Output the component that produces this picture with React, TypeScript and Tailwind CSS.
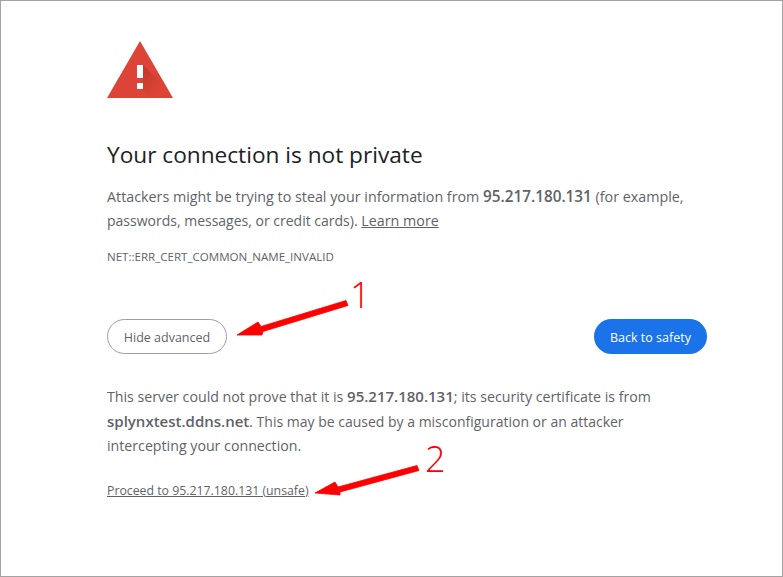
import React from 'react';

const font = "font-['Open_Sans','Noto_Sans',sans-serif]";

const Arrow: React.FC<{ className: string; width: number; height: number; d: string }> = ({ className, width, height, d }) => (
  <svg className={className} width={width} height={height} viewBox={`0 0 ${width} ${height}`}>
    <path d={d} fill="#fe0000" stroke="#fe0000" strokeWidth="0.8" strokeLinejoin="round" />
  </svg>
);

export default function App() {
  return (
    <div className={`relative w-[783px] h-[577px] bg-white overflow-hidden ${font}`}>
      <div className="flex h-[577px] w-[783px] flex-col border border-[#a3a3a3] pl-[106px] pr-[75px] pt-[40px] text-[#5f6368]">
        {/* Warning icon */}
        <svg width="66" height="58" viewBox="0 0 66 58" className="block shrink-0">
          <defs>
            <linearGradient id="warnShadow" x1="0.1" y1="0.1" x2="0.8" y2="0.8">
              <stop offset="0" stopColor="#a52714" stopOpacity="0.45" />
              <stop offset="1" stopColor="#a52714" stopOpacity="0" />
            </linearGradient>
          </defs>
          <path d="M33 0 L66 57 H0 Z" fill="#db4437" />
          <path d="M36 24 L56 44 L56 57 H44 L30 43 L36 43 Z" fill="url(#warnShadow)" />
          <rect x="30" y="24" width="6" height="13" fill="#fff" />
          <rect x="30" y="42" width="6" height="6" fill="#fff" />
        </svg>

        <h1 className="mt-[40px] text-[22.65px] leading-[32px] font-normal text-[#202124]">Your connection is not private</h1>

        <p className="mt-[14px] text-[14.3px] leading-[24px]">
          Attackers might be trying to steal your information from <strong className="text-[15.3px] leading-none font-semibold">95.217.180.131</strong> (for example, <span className="text-[14px]">passwords, messages, or credit cards).</span> <span className="underline">Learn more</span>
        </p>

        <div className="mt-[16px] text-[11.55px] leading-[16px]">NET::ERR_CERT_COMMON_NAME_INVALID</div>

        <div className="mt-[54px] flex items-center justify-between">
          <button className="h-[35px] w-[120px] rounded-full border border-[#9aa0a6] bg-white pt-[3px] text-[12.5px] text-[#5f6368]">Hide advanced</button>
          <button className="h-[35px] w-[113px] rounded-full bg-[#1a73e8] pt-[3px] text-[12.5px] text-white">Back to safety</button>
        </div>

        <p className="mt-[31px] text-[14.2px] leading-[24.5px]">
          This server could not prove that it is <strong className="text-[15px] leading-none font-semibold">95.217.180.131</strong>; its security certificate is from <strong className="text-[15px] leading-none font-semibold">splynxtest.ddns.net</strong><span className="text-[14px]">. This may be caused by a misconfiguration or an attacker</span><br />intercepting your connection.
        </p>

        <a className="mt-[24px] block text-[12.3px] leading-[16px] underline">Proceed to 95.217.180.131 (unsafe)</a>
      </div>

      {/* Annotations */}
      <Arrow className="absolute left-[235px] top-[300px]" width={114} height={37} d="M2 35 L23 22 L26 26.5 L111 0.5 L113 5.5 L28 31.5 L27 35 Z" />
      <span className="absolute left-[350px] top-[274px] text-[36px] leading-[42px] font-light text-[#fe0000]">1</span>
      <Arrow className="absolute left-[314px] top-[464px]" width={107} height={33} d="M1 29 L21 18 L24 23 L103 1.5 L105 6.5 L26 28 L26 31 Z" />
      <span className="absolute left-[425px] top-[438px] text-[36px] leading-[42px] font-light text-[#fe0000]">2</span>
    </div>
  );
}
